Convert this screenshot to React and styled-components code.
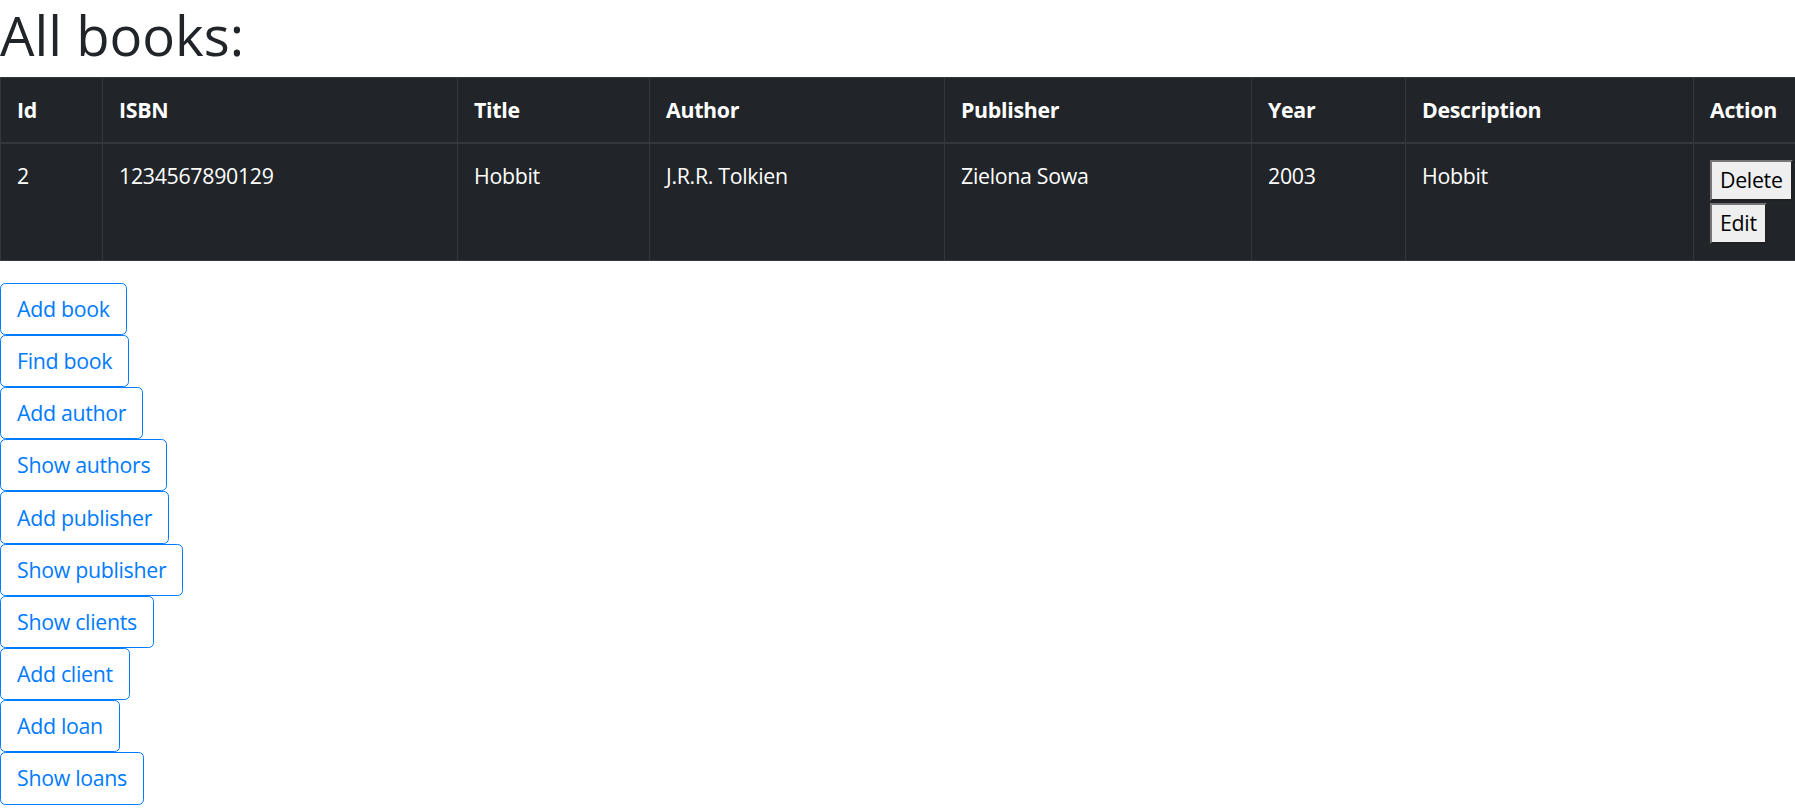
import styled, { createGlobalStyle } from "styled-components";

const GlobalStyle = createGlobalStyle`
  html, body {
    margin: 0;
    padding: 0;
    background: #fff;
    overflow-x: hidden;
  }
  body {
    font-family: "Open Sans", "Noto Sans", "Liberation Sans", sans-serif;
    font-size: 21.33px;
    line-height: 32px;
    letter-spacing: -0.3px;
    color: #212529;
  }
`;

const Page = styled.div`
  display: flex;
  flex-direction: column;
  align-items: flex-start;
`;

const Heading = styled.h1`
  margin: 0 0 6.7px;
  font-size: 54.5px;
  font-weight: 500;
  line-height: 70px;
  letter-spacing: 0;
  color: #212529;
`;

const Table = styled.table`
  table-layout: fixed;
  border-collapse: collapse;
  width: 1810px;
  margin-bottom: 22px;
  background-color: #212529;
  color: #fff;
  border: 1px solid #32383e;
`;

const Col = styled.col`
  width: ${(p) => p.$w}px;
`;

const HeadCell = styled.th`
  padding: 16px;
  text-align: left;
  vertical-align: bottom;
  font-weight: 700;
  border: 1px solid #32383e;
  border-bottom-width: 2px;
`;

const Cell = styled.td`
  padding: 16px;
  vertical-align: top;
  border: 1px solid #32383e;
`;

const ActionStack = styled.div`
  display: flex;
  flex-direction: column;
  align-items: flex-start;
  gap: 2px;
`;

const NativeButton = styled.button`
  font: inherit;
  letter-spacing: inherit;
  line-height: 32px;
  color: #000;
  background-color: #efefef;
  border: 2px outset #767676;
  padding: 2.5px 8px;
  border-radius: 0;
  cursor: pointer;
`;

const NavList = styled.div`
  display: flex;
  flex-direction: column;
  align-items: flex-start;
`;

const OutlineButton = styled.button`
  box-sizing: border-box;
  height: 52.2px;
  padding: 0 16px;
  font: inherit;
  letter-spacing: inherit;
  line-height: 32px;
  color: #007bff;
  background-color: #fff;
  border: 1px solid #007bff;
  border-radius: 5.33px;
  cursor: pointer;
`;

const columns = [
  { title: "Id", width: 102 },
  { title: "ISBN", width: 355 },
  { title: "Title", width: 192 },
  { title: "Author", width: 295 },
  { title: "Publisher", width: 307 },
  { title: "Year", width: 154 },
  { title: "Description", width: 288 },
  { title: "Action", width: 117 },
];

const books = [
  {
    id: 2,
    isbn: "1234567890129",
    title: "Hobbit",
    author: "J.R.R. Tolkien",
    publisher: "Zielona Sowa",
    year: 2003,
    description: "Hobbit",
  },
];

const links = [
  "Add book",
  "Find book",
  "Add author",
  "Show authors",
  "Add publisher",
  "Show publisher",
  "Show clients",
  "Add client",
  "Add loan",
  "Show loans",
];

const App = () => {
  return (
    <Page>
      <GlobalStyle />
      <Heading>All books:</Heading>
      <Table>
        <colgroup>
          {columns.map((c) => (
            <Col key={c.title} $w={c.width} />
          ))}
        </colgroup>
        <thead>
          <tr>
            {columns.map((c) => (
              <HeadCell key={c.title}>{c.title}</HeadCell>
            ))}
          </tr>
        </thead>
        <tbody>
          {books.map((b) => (
            <tr key={b.id}>
              <Cell>{b.id}</Cell>
              <Cell>{b.isbn}</Cell>
              <Cell>{b.title}</Cell>
              <Cell>{b.author}</Cell>
              <Cell>{b.publisher}</Cell>
              <Cell>{b.year}</Cell>
              <Cell>{b.description}</Cell>
              <Cell>
                <ActionStack>
                  <NativeButton>Delete</NativeButton>
                  <NativeButton>Edit</NativeButton>
                </ActionStack>
              </Cell>
            </tr>
          ))}
        </tbody>
      </Table>
      <NavList>
        {links.map((label) => (
          <OutlineButton key={label}>{label}</OutlineButton>
        ))}
      </NavList>
    </Page>
  );
};

export default App;
